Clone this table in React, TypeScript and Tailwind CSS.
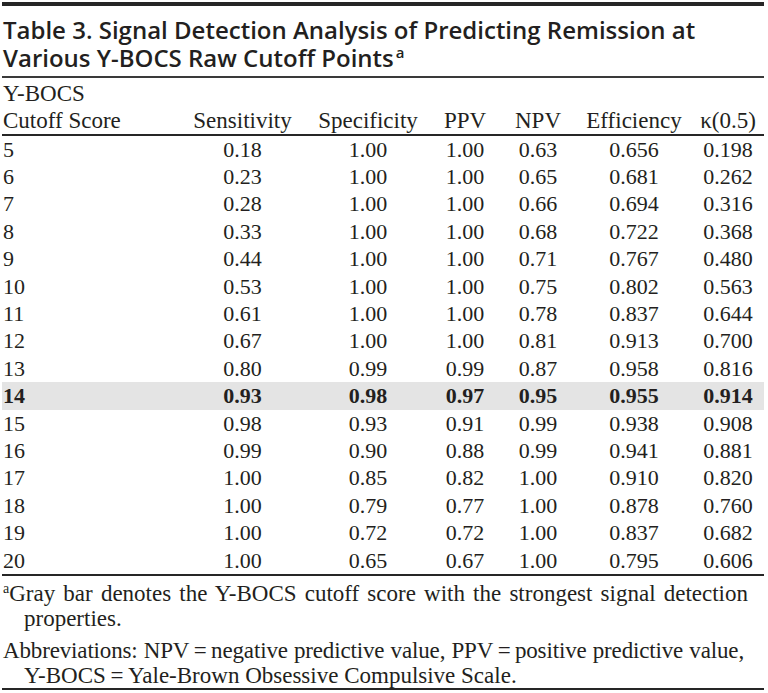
import React from "react";

type Row = [string, string, string, string, string, string, string];

const rows: Row[] = [
  ["5", "0.18", "1.00", "1.00", "0.63", "0.656", "0.198"],
  ["6", "0.23", "1.00", "1.00", "0.65", "0.681", "0.262"],
  ["7", "0.28", "1.00", "1.00", "0.66", "0.694", "0.316"],
  ["8", "0.33", "1.00", "1.00", "0.68", "0.722", "0.368"],
  ["9", "0.44", "1.00", "1.00", "0.71", "0.767", "0.480"],
  ["10", "0.53", "1.00", "1.00", "0.75", "0.802", "0.563"],
  ["11", "0.61", "1.00", "1.00", "0.78", "0.837", "0.644"],
  ["12", "0.67", "1.00", "1.00", "0.81", "0.913", "0.700"],
  ["13", "0.80", "0.99", "0.99", "0.87", "0.958", "0.816"],
  ["14", "0.93", "0.98", "0.97", "0.95", "0.955", "0.914"],
  ["15", "0.98", "0.93", "0.91", "0.99", "0.938", "0.908"],
  ["16", "0.99", "0.90", "0.88", "0.99", "0.941", "0.881"],
  ["17", "1.00", "0.85", "0.82", "1.00", "0.910", "0.820"],
  ["18", "1.00", "0.79", "0.77", "1.00", "0.878", "0.760"],
  ["19", "1.00", "0.72", "0.72", "1.00", "0.837", "0.682"],
  ["20", "1.00", "0.65", "0.67", "1.00", "0.795", "0.606"],
];

const grid = "grid grid-cols-[178px_125px_126px_68px_78px_114px_73px]";

export default function App() {
  return (
    <div className="w-[768px] h-[693px] bg-white pt-[2px] pl-[2px] pr-[4px] text-[#231f20] overflow-hidden">
      {/* Top bar */}
      <div className="h-[4px] bg-[#262626]" />

      {/* Title */}
      <h1
        className="mt-[10px] pl-[1px] text-[24px] leading-[28px] font-semibold whitespace-nowrap"
        style={{ fontFamily: "'Open Sans', Lato, sans-serif" }}
      >
        Table 3. Signal Detection Analysis of Predicting Remission at
        <br />
        Various Y-BOCS Raw Cutoff Points
        <sup className="text-[15px] font-semibold relative -top-[9px] ml-[2px]">a</sup>
      </h1>
      <div className="mt-[4px] h-[1.5px] bg-[#3a3a3a]" />

      <div style={{ fontFamily: "'Liberation Serif', 'Times New Roman', serif" }}>
        {/* Header */}
        <div className={`${grid} mt-[2px] text-[23px] leading-[27px]`}>
          <div className="pl-[1px]">
            Y-BOCS
            <br />
            Cutoff Score
          </div>
          <div className="self-end text-center">Sensitivity</div>
          <div className="self-end text-center">Specificity</div>
          <div className="self-end text-center">PPV</div>
          <div className="self-end text-center">NPV</div>
          <div className="self-end text-center">Efficiency</div>
          <div className="self-end text-center pl-[1px]">κ(0.5)</div>
        </div>
        <div className="h-[2px] bg-[#262626]" />

        {/* Body */}
        <div className="text-[22px] leading-[27.4px]">
          {rows.map((r) => {
            const hi = r[0] === "14";
            return (
              <div key={r[0]} className={`${grid} ${hi ? "bg-[#e4e4e4] font-bold" : ""}`}>
                <div className="pl-[1px]">{r[0]}</div>
                <div className="text-center">{r[1]}</div>
                <div className="text-center">{r[2]}</div>
                <div className="text-center">{r[3]}</div>
                <div className="text-center">{r[4]}</div>
                <div className="text-center">{r[5]}</div>
                <div className="text-center pl-[1px]">{r[6]}</div>
              </div>
            );
          })}
        </div>
        <div className="h-[2px] bg-[#262626]" />

        {/* Footnotes: first lines are justified like the printed source */}
        <div className="pt-[5px] text-[23px] leading-[25px] whitespace-nowrap">
          <div>
            <div className="pl-[1px] pr-[16px] [text-align-last:justify]">
              <sup className="text-[14px] relative -top-[8px]">a</sup>Gray bar denotes the Y-BOCS cutoff score with the strongest signal detection
            </div>
            <div className="pl-[22px]">properties.</div>
          </div>
          <div className="mt-[7px]">
            <div className="pl-[1px] pr-[20px] tracking-[-0.15px] [text-align-last:justify]">
              Abbreviations: NPV{"\u2009=\u2009"}negative predictive value, PPV{"\u2009=\u2009"}positive predictive value,
            </div>
            <div className="pl-[22px]">Y-BOCS{"\u2009=\u2009"}Yale-Brown Obsessive Compulsive Scale.</div>
          </div>
        </div>
        <div className="h-[2px] bg-[#262626]" />
      </div>
    </div>
  );
}
